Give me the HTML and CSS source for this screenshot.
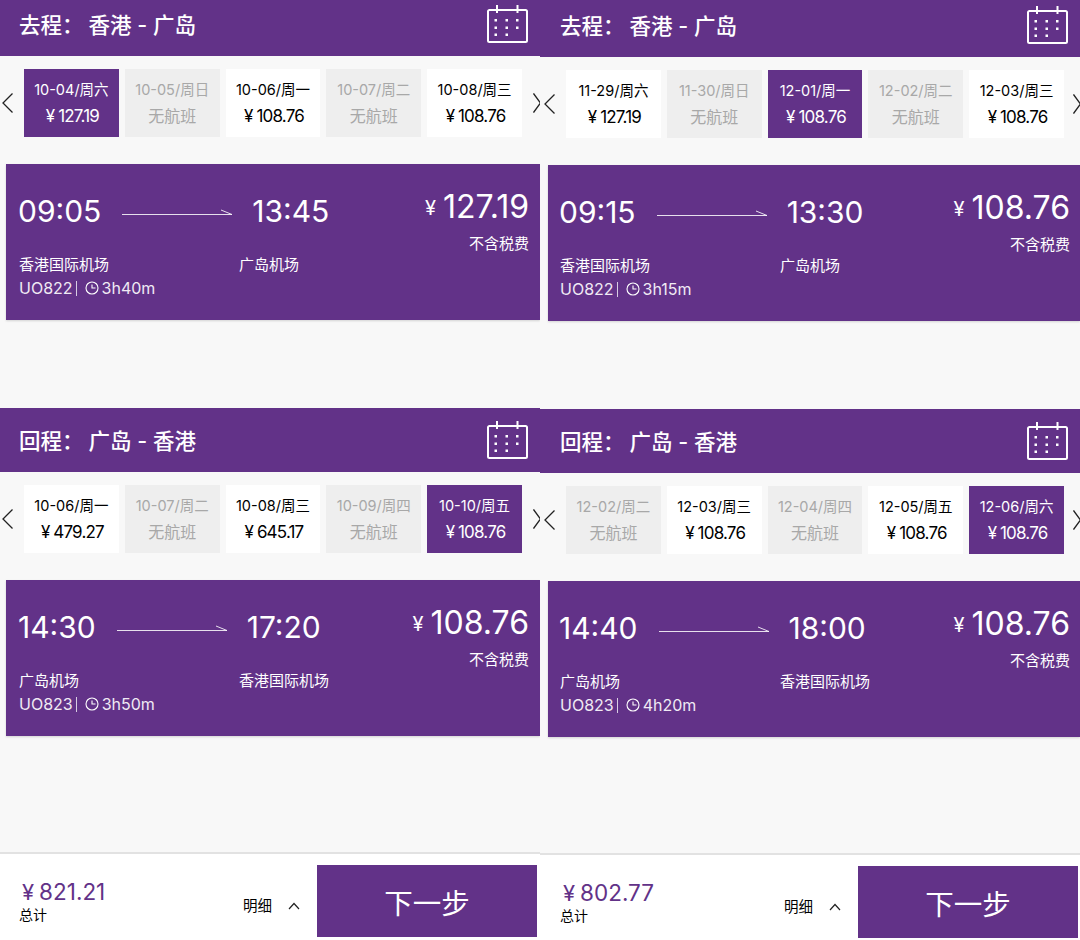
FILE: index.html
```html
<!DOCTYPE html>
<html lang="zh-CN">
  <head>
    <meta charset="utf-8" />
    <meta name="viewport" content="width=device-width, initial-scale=1.0" />
    <title>选择航班</title>
    <link rel="stylesheet" href="styles.css">
  </head>
  <body>
    <svg class="defs" width="0" height="0">
      <symbol id="calendar" viewBox="0 0 41 38">
        <path d="M2.500 5h36a1.500 1.500 0 0 1 1.500 1.500v29a1.500 1.500 0 0 1-1.500 1.500h-36A1.500 1.500 0 0 1 1 35.500v-29A1.500 1.500 0 0 1 2.500 5Z" fill="none" stroke="#fff" stroke-width="2"/>
        <path d="M10 0v8M30.500 0v8" fill="none" stroke="#fff" stroke-width="2"/>
        <path d="M7.500 14h2.500v2.500H7.500zM18.500 14H21v2.500h-2.500zM29 14h2.500v2.500H29zM7.500 21.500h2.500V24H7.500zM18.500 21.500H21V24h-2.500zM29 21.500h2.500V24H29zM7.500 28.500h2.500V31H7.500zM18.500 28.500H21V31h-2.500z" fill="#fff"/>
      </symbol>
      <symbol id="prev" viewBox="0 0 11 20">
        <path d="M10.500 .5 1 10l9.500 9.500" fill="none" stroke="currentColor" stroke-width="1.300"/>
      </symbol>
      <symbol id="next" viewBox="0 0 8 20">
        <path d="M.5 .5 7.500 10 .5 19.500" fill="none" stroke="currentColor" stroke-width="1.300"/>
      </symbol>
      <symbol id="arrow" viewBox="0 0 110 6">
        <path d="M0 5.500h110L99 1" fill="none" stroke="#fff" stroke-width="1" opacity=".85"/>
      </symbol>
      <symbol id="clock" viewBox="0 0 14 14">
        <circle cx="7" cy="7" r="6" fill="none" stroke="#fff" stroke-width="1.100"/>
        <path d="M7 3.500V7h3.500" fill="none" stroke="#fff" stroke-width="1.100"/>
      </symbol>
      <symbol id="caret" viewBox="0 0 12 8">
        <path d="M1 7 6 1.500 11 7" fill="none" stroke="#222" stroke-width="1.200"/>
      </symbol>
    </svg>

    <main class="screen">
      <section class="leg">
        <header class="leg-head">
          <h2 class="leg-title"><span>去程：</span><span>香港 - 广岛</span></h2>
          <svg class="cal"><use href="#calendar"/></svg>
        </header>
        <div class="days">
          <svg class="chev chev-prev"><use href="#prev"/></svg>
          <div class="day on"><p>10-04/周六</p><b>¥<i>127.19</i></b></div>
          <div class="day none"><p>10-05/周日</p><b>无航班</b></div>
          <div class="day"><p>10-06/周一</p><b>¥<i>108.76</i></b></div>
          <div class="day none"><p>10-07/周二</p><b>无航班</b></div>
          <div class="day"><p>10-08/周三</p><b>¥<i>108.76</i></b></div>
          <svg class="chev chev-next"><use href="#next"/></svg>
        </div>
        <article class="flight">
          <div class="flight-main">
            <div class="times"><span>09:05</span><svg class="arrow"><use href="#arrow"/></svg><span>13:45</span></div>
            <div class="ports"><span>香港国际机场</span><span>广岛机场</span></div>
            <div class="meta"><span class="code">UO822</span><svg class="clock"><use href="#clock"/></svg><span>3h40m</span></div>
          </div>
          <div class="fare"><div class="fare-num"><small>¥</small>127.19</div><p>不含税费</p></div>
        </article>
      </section>

      <section class="leg leg-back">
        <header class="leg-head">
          <h2 class="leg-title"><span>回程：</span><span>广岛 - 香港</span></h2>
          <svg class="cal"><use href="#calendar"/></svg>
        </header>
        <div class="days">
          <svg class="chev chev-prev"><use href="#prev"/></svg>
          <div class="day"><p>10-06/周一</p><b>¥<i>479.27</i></b></div>
          <div class="day none"><p>10-07/周二</p><b>无航班</b></div>
          <div class="day"><p>10-08/周三</p><b>¥<i>645.17</i></b></div>
          <div class="day none"><p>10-09/周四</p><b>无航班</b></div>
          <div class="day on"><p>10-10/周五</p><b>¥<i>108.76</i></b></div>
          <svg class="chev chev-next"><use href="#next"/></svg>
        </div>
        <article class="flight">
          <div class="flight-main">
            <div class="times"><span>14:30</span><svg class="arrow"><use href="#arrow"/></svg><span>17:20</span></div>
            <div class="ports"><span>广岛机场</span><span>香港国际机场</span></div>
            <div class="meta"><span class="code">UO823</span><svg class="clock"><use href="#clock"/></svg><span>3h50m</span></div>
          </div>
          <div class="fare"><div class="fare-num"><small>¥</small>108.76</div><p>不含税费</p></div>
        </article>
      </section>

      <footer class="bar">
        <div class="total"><div class="total-num"><small>¥</small>821.21</div><p>总计</p></div>
        <div class="detail">明细<svg class="caret"><use href="#caret"/></svg></div>
        <button class="next-btn">下一步</button>
      </footer>
    </main>

    <main class="screen screen-b">
      <section class="leg">
        <header class="leg-head">
          <h2 class="leg-title"><span>去程：</span><span>香港 - 广岛</span></h2>
          <svg class="cal"><use href="#calendar"/></svg>
        </header>
        <div class="days">
          <svg class="chev chev-prev"><use href="#prev"/></svg>
          <div class="day"><p>11-29/周六</p><b>¥<i>127.19</i></b></div>
          <div class="day none"><p>11-30/周日</p><b>无航班</b></div>
          <div class="day on"><p>12-01/周一</p><b>¥<i>108.76</i></b></div>
          <div class="day none"><p>12-02/周二</p><b>无航班</b></div>
          <div class="day"><p>12-03/周三</p><b>¥<i>108.76</i></b></div>
          <svg class="chev chev-next"><use href="#next"/></svg>
        </div>
        <article class="flight">
          <div class="flight-main">
            <div class="times"><span>09:15</span><svg class="arrow"><use href="#arrow"/></svg><span>13:30</span></div>
            <div class="ports"><span>香港国际机场</span><span>广岛机场</span></div>
            <div class="meta"><span class="code">UO822</span><svg class="clock"><use href="#clock"/></svg><span>3h15m</span></div>
          </div>
          <div class="fare"><div class="fare-num"><small>¥</small>108.76</div><p>不含税费</p></div>
        </article>
      </section>

      <section class="leg leg-back">
        <header class="leg-head">
          <h2 class="leg-title"><span>回程：</span><span>广岛 - 香港</span></h2>
          <svg class="cal"><use href="#calendar"/></svg>
        </header>
        <div class="days">
          <svg class="chev chev-prev"><use href="#prev"/></svg>
          <div class="day none"><p>12-02/周二</p><b>无航班</b></div>
          <div class="day"><p>12-03/周三</p><b>¥<i>108.76</i></b></div>
          <div class="day none"><p>12-04/周四</p><b>无航班</b></div>
          <div class="day"><p>12-05/周五</p><b>¥<i>108.76</i></b></div>
          <div class="day on"><p>12-06/周六</p><b>¥<i>108.76</i></b></div>
          <svg class="chev chev-next"><use href="#next"/></svg>
        </div>
        <article class="flight">
          <div class="flight-main">
            <div class="times"><span>14:40</span><svg class="arrow"><use href="#arrow"/></svg><span>18:00</span></div>
            <div class="ports"><span>广岛机场</span><span>香港国际机场</span></div>
            <div class="meta"><span class="code">UO823</span><svg class="clock"><use href="#clock"/></svg><span>4h20m</span></div>
          </div>
          <div class="fare"><div class="fare-num"><small>¥</small>108.76</div><p>不含税费</p></div>
        </article>
      </section>

      <footer class="bar">
        <div class="total"><div class="total-num"><small>¥</small>802.77</div><p>总计</p></div>
        <div class="detail">明细<svg class="caret"><use href="#caret"/></svg></div>
        <button class="next-btn">下一步</button>
      </footer>
    </main>
  </body>
</html>
```

FILE: styles.css
```css
* {
  box-sizing: border-box;
}
html, body {
  margin: 0;
  height: 940px;
  overflow: hidden;
}
body {
  display: flex;
  width: 1080px;
  background: #f8f8f8;
  font-family: Inter, "Noto Sans CJK SC", sans-serif;
  color: #000;
}
p, h2 {
  margin: 0;
  font-weight: 400;
}
.defs {
  position: absolute;
}

.screen {
  --inset: 0px;
  --purple: #623288;
  display: flex;
  flex-flow: column;
  width: 540px;
  height: 940px;
  overflow: hidden;
}
.screen-b {
  --inset: 1px;
}

.leg {
  height: calc(408px + var(--inset));
}
.leg-back {
  height: 444px;
}
.leg-head {
  display: flex;
  justify-content: space-between;
  align-items: flex-end;
  height: calc(56px + var(--inset));
  padding: 0 12px 13px calc(19px + var(--inset));
  background: var(--purple);
  color: #fff;
}
.leg-back .leg-head {
  height: 64px;
}
.leg-title {
  display: flex;
  gap: 5px;
  margin-bottom: 8px;
  font-size: 21.500px;
  font-weight: 500;
  line-height: 20px;
}
.cal {
  width: 41px;
  height: 38px;
}

.days {
  display: flex;
  align-items: center;
  gap: 6px;
  height: 68px;
  margin-top: 13px;
  padding-left: calc(24px + var(--inset) * 2);
  position: relative;
}
.chev {
  position: absolute;
  top: 24px;
  height: 20px;
  color: #222;
}
.chev-prev {
  left: calc(2px + var(--inset) * 2);
  width: 11px;
}
.chev-next {
  right: -1px;
  width: 8px;
}
.day {
  width: 94.800px;
  height: 68px;
  padding-top: 11px;
  background: #fff;
  text-align: center;
}
.day p {
  font-size: 14.500px;
  line-height: 20px;
}
.day b {
  display: block;
  margin-top: 6px;
  padding-left: 2px;
  font-size: 17px;
  font-weight: 400;
  line-height: 20px;
}
.day i {
  margin-left: 3px;
  font-style: normal;
  letter-spacing: -0.800px;
}
.day.on {
  background: var(--purple);
  color: #fff;
}
.day.none {
  background: #eeeeee;
  color: #a8a8a8;
}
.day.none b {
  padding-left: 0;
  font-size: 16px;
}

.flight {
  display: flex;
  justify-content: space-between;
  height: 156px;
  margin: 27px 0 0 calc(6px + var(--inset) * 2);
  padding: 29px calc(11px - var(--inset)) 0 calc(13px - var(--inset));
  background: var(--purple);
  color: #fff;
  box-shadow: 0 1px 2px rgba(0, 0, 0, 0.15);
}
.times {
  display: flex;
  align-items: center;
  height: 36px;
  margin-left: -1px;
  font-size: 30px;
}
.arrow {
  width: 110px;
  height: 6px;
  margin: 2px 20px 0 21px;
}
.ports {
  display: flex;
  margin-top: 26px;
  font-size: 15px;
  line-height: 20px;
}
.ports span:first-child {
  width: 220px;
}
.meta {
  display: flex;
  align-items: center;
  margin-top: 3px;
  font-size: 16px;
  line-height: 20px;
  color: #f0eaf4;
}
.code {
  padding-right: 3px;
  border-right: 1px solid #d8cce2;
  line-height: 15px;
}
.clock {
  width: 14px;
  height: 14px;
  margin: 0 3px 0 8px;
}
.fare {
  margin-top: -7px;
  text-align: right;
}
.fare-num {
  font-size: 32px;
  line-height: 42px;
}
.fare-num small {
  margin-right: 7px;
  font-size: 20px;
  vertical-align: 3px;
}
.fare p {
  margin-top: 5px;
  font-size: 15px;
  line-height: 20px;
}

.bar {
  display: flex;
  align-items: flex-start;
  flex: 1;
  padding: 11px 2px 0 calc(19px + var(--inset));
  background: #fff;
  border-top: 2px solid #e2e2e2;
}
.total {
  width: 224px;
  padding-top: 14px;
}
.total-num {
  padding-left: 3px;
  color: var(--purple);
  font-size: 22.500px;
  line-height: 26px;
}
.total-num small {
  margin-right: 5px;
  font-size: 22px;
}
.total p {
  font-size: 14px;
  line-height: 20px;
}
.detail {
  display: flex;
  align-items: center;
  width: 74px;
  margin-top: 31px;
  font-size: 14.500px;
  line-height: 20px;
}
.caret {
  width: 12px;
  height: 8px;
  margin-left: 16px;
}
.next-btn {
  width: 220px;
  height: 72px;
  padding: 0;
  border: 0;
  background: var(--purple);
  color: #fff;
  font: inherit;
  font-size: 28.500px;
}
```
